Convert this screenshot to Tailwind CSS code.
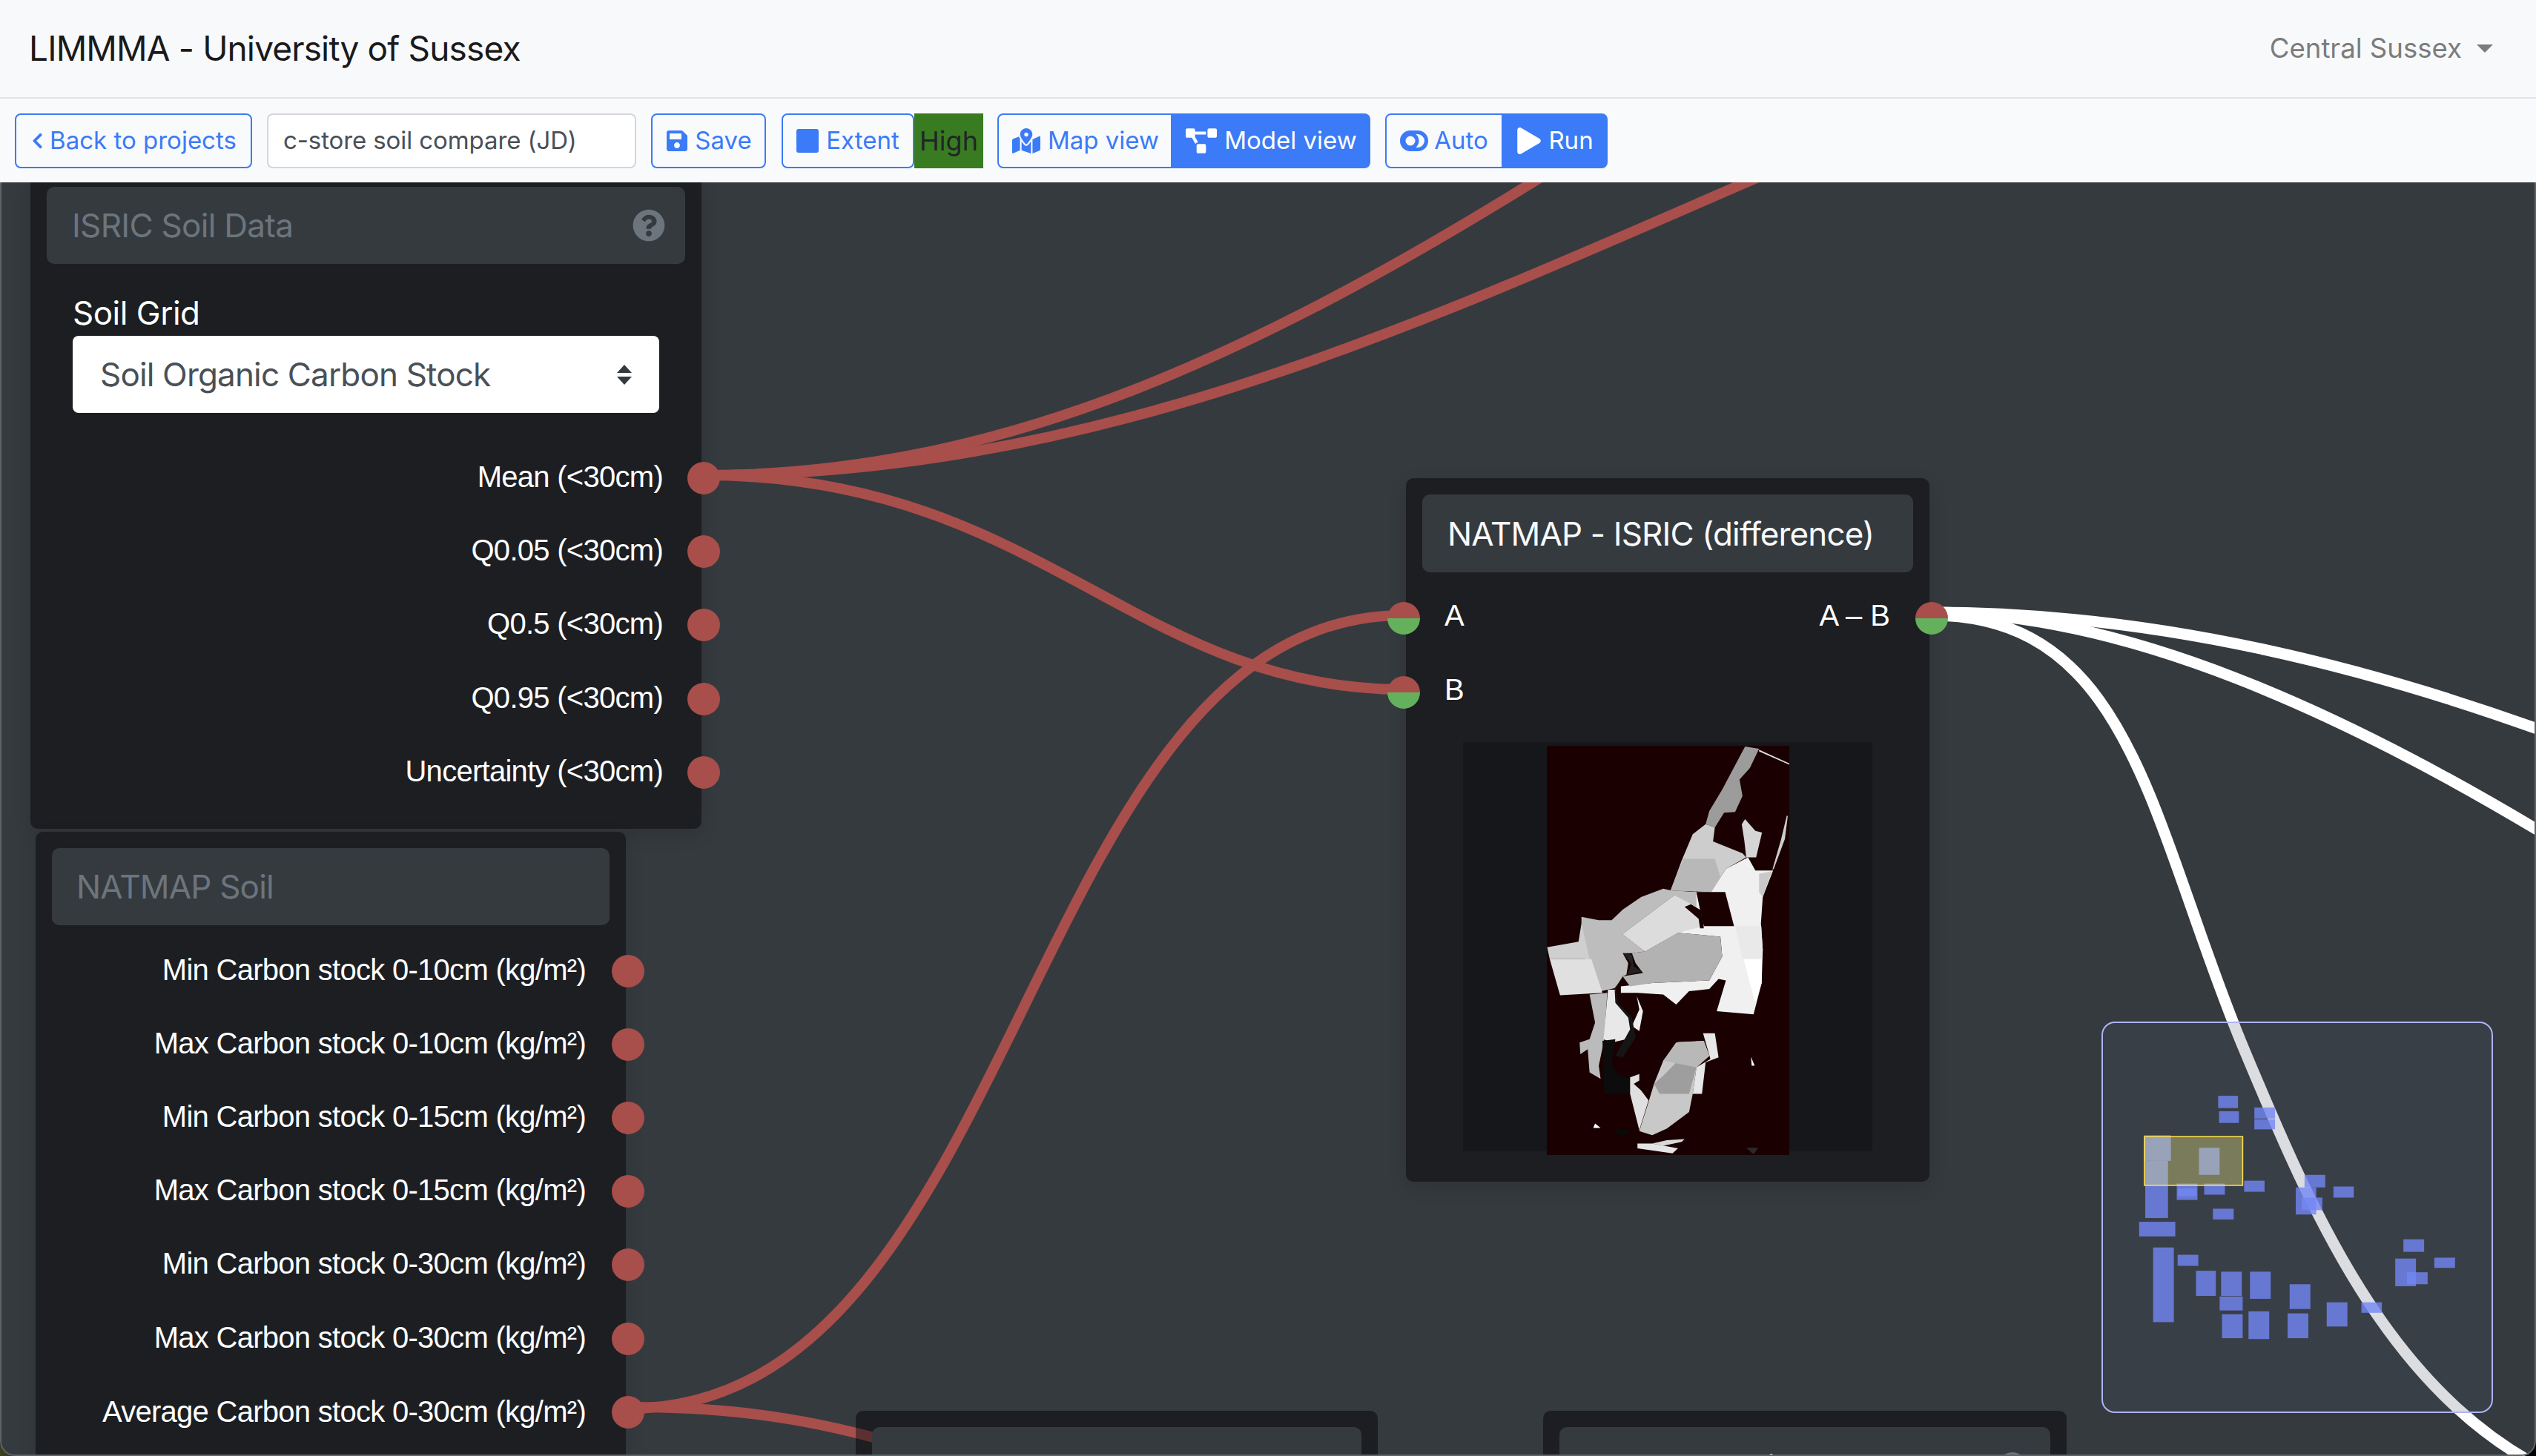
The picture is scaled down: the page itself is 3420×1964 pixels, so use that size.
<!DOCTYPE html>
<html lang="en">
<head>
  <meta charset="UTF-8" />
  <title>LIMMMA - University of Sussex</title>
  <script src="https://cdn.jsdelivr.net/npm/@tailwindcss/browser@4"></script>
</head>
<body class="bg-[linear-gradient(to_right,#3a4020,#000)]">
<div class="w-[3420px] h-[1964px] flex flex-col overflow-hidden font-['Inter',sans-serif]">

  <!-- Navbar -->
  <div class="h-[133px] shrink-0 bg-[#f8f9fb] border-b-2 border-[#e2e3ea] flex items-center justify-between pl-[39px] pr-[58px]">
    <div class="text-[46px] text-[#1a1a1a] tracking-[-0.85px]">LIMMMA - University of Sussex</div>
    <div class="flex items-center text-[#7c7c7c] text-[36.6px] gap-[20px]">
      Central Sussex
      <span class="w-0 h-0 border-x-[11px] border-x-transparent border-t-[11px] border-t-[#7c7c7c]"></span>
    </div>
  </div>

  <!-- Toolbar -->
  <div class="h-[113px] shrink-0 bg-[#f9fafc] flex items-center pl-[20px] text-[33px] text-[#3b7bf7]">
    <button class="h-[74px] w-[320px] border-2 border-[#3b7bf7] rounded-[8px] flex items-center justify-center gap-[9px] pl-[2px]">
      <svg class="h-[24px] w-[15px] fill-current" viewBox="0 0 320 512"><path d="M34.52 239.03L228.87 44.69c9.37-9.37 24.57-9.37 33.94 0l22.67 22.67c9.36 9.36 9.37 24.52.04 33.9L131.49 256l154.02 154.75c9.34 9.38 9.32 24.54-.04 33.9l-22.67 22.67c-9.37 9.37-24.57 9.37-33.94 0L34.52 272.97c-9.37-9.37-9.37-24.57 0-33.94z"/></svg>
      Back to projects
    </button>
    <div class="h-[74px] w-[498px] ml-[20px] bg-white border-2 border-[#d3d6da] rounded-[8px] flex items-center pl-[20px] text-[#495057] tracking-[-0.1px]">c-store soil compare (JD)</div>
    <button class="h-[74px] w-[155px] ml-[20px] border-2 border-[#3b7bf7] rounded-[8px] flex items-center justify-center gap-[10px] pl-[2px]">
      <svg class="h-[32px] w-[28px] fill-current" viewBox="0 0 448 512"><path d="M433.941 129.941l-83.882-83.882A48 48 0 0 0 316.118 32H48C21.49 32 0 53.49 0 80v352c0 26.51 21.49 48 48 48h352c26.51 0 48-21.49 48-48V163.882a48 48 0 0 0-14.059-33.941zM224 416c-35.346 0-64-28.654-64-64 0-35.346 28.654-64 64-64s64 28.654 64 64c0 35.346-28.654 64-64 64zm96-304.52V212c0 6.627-5.373 12-12 12H76c-6.627 0-12-5.373-12-12V108c0-6.627 5.373-12 12-12h228.52c3.183 0 6.235 1.264 8.485 3.515l3.48 3.48A11.996 11.996 0 0 1 320 111.48z"/></svg>
      Save
    </button>
    <button class="h-[74px] w-[179px] ml-[21px] border-2 border-[#3b7bf7] rounded-[8px] flex items-center justify-center gap-[10px]">
      <span class="w-[30px] h-[32px] bg-[#3b7bf7] rounded-[3px]"></span>
      Extent
    </button>
    <div class="h-[74px] w-[93px] bg-[#397b21] text-[#212529] text-[36px] flex items-center justify-center">High</div>

    <div class="flex h-[74px] ml-[19px] w-[503px]">
      <button class="w-[236px] border-2 border-[#3b7bf7] rounded-l-[8px] flex items-center justify-center gap-[10px] pl-[2px]">
        <svg class="h-[38px] w-[38px] fill-current" viewBox="0 0 576 512"><path d="M288 0c-69.59 0-126 56.41-126 126 0 56.26 82.35 158.8 113.9 196.02 6.39 7.54 17.82 7.54 24.2 0C331.65 284.8 414 182.26 414 126 414 56.41 357.59 0 288 0zm0 168c-23.2 0-42-18.8-42-42s18.8-42 42-42 42 18.8 42 42-18.8 42-42 42zM20.12 215.95A32.006 32.006 0 0 0 0 245.66v250.32c0 11.32 11.43 19.06 21.94 14.86L160 448V214.92c-8.84-15.98-16.07-31.54-21.25-46.42L20.12 215.95zM288 359.67c-14.07 0-27.38-6.18-36.51-16.96-19.66-23.2-40.57-49.62-59.49-76.72v182l192 64V266c-18.92 27.09-39.82 53.52-59.49 76.72-9.13 10.77-22.44 16.95-36.51 16.95zm266.06-198.51L416 224v288l139.88-55.95A31.996 31.996 0 0 0 576 426.34V176.02c0-11.32-11.43-19.06-21.94-14.86z"/></svg>
        Map view
      </button>
      <button class="flex-1 bg-[#3b7bf7] text-white rounded-r-[8px] flex items-center justify-center gap-[10px]">
        <svg class="h-[38px] w-[42px] fill-current" viewBox="0 0 640 512"><path d="M384 320H256c-17.67 0-32 14.33-32 32v128c0 17.67 14.33 32 32 32h128c17.67 0 32-14.33 32-32V352c0-17.67-14.33-32-32-32zM192 32c0-17.67-14.33-32-32-32H32C14.33 0 0 14.33 0 32v128c0 17.67 14.33 32 32 32h95.72l73.16 128.04C211.98 300.98 232.4 288 256 288h.28L192 175.51V128h224V64H192V32zM608 0H480c-17.67 0-32 14.33-32 32v128c0 17.67 14.33 32 32 32h128c17.67 0 32-14.33 32-32V32c0-17.67-14.33-32-32-32z"/></svg>
        Model view
      </button>
    </div>

    <div class="flex h-[74px] ml-[20px] w-[300px]">
      <button class="w-[159px] border-2 border-[#3b7bf7] rounded-l-[8px] flex items-center justify-center gap-[8px]">
        <svg class="h-[28px] w-[38px] fill-none stroke-current" stroke-width="5" viewBox="0 0 38 28"><rect x="2.5" y="2.5" width="33" height="23" rx="11.5"/><circle cx="14" cy="14" r="9"/></svg>
        Auto
      </button>
      <button class="flex-1 bg-[#3b7bf7] text-white rounded-r-[8px] flex items-center justify-center gap-[10px]">
        <svg class="h-[36px] w-[32px] fill-current" viewBox="0 0 448 512"><path d="M424.4 214.7L72.4 6.6C43.8-10.3 0 6.1 0 47.9V464c0 37.5 40.7 60.1 72.4 41.3l352-208c31.4-18.5 31.5-64.1 0-82.6z"/></svg>
        Run
      </button>
    </div>
  </div>

  <!-- Model canvas -->
  <div class="relative flex-1 bg-[#353a3f] overflow-hidden rounded-b-[20px]">

    <!-- Wires -->
    <svg class="absolute left-0 top-0 w-[3420px] h-[1718px]" viewBox="0 246 3420 1718" fill="none" stroke-linecap="round">
      <g stroke="#a84e4b" stroke-width="14">
        <path d="M949 641 C1350 641 1700 480 2140 200"/>
        <path d="M949 641 C1500 641 1950 420 2415 220"/>
        <path d="M949 641 C1400 641 1530 930 1893 930"/>
        <path d="M847 1900 C1380 1900 1380 830 1893 830"/>
        <path d="M847 1898 C950 1898 1060 1905 1200 1945"/>
      </g>
      <g stroke="#ffffff" stroke-width="15">
        <path d="M2605 826 C2900 826 3200 895 3520 1020"/>
        <path d="M2605 826 C2850 826 3150 945 3520 1180"/>
        <path d="M2605 830 C2875 830 2900 1110 3024 1410 C3122 1645 3230 1900 3470 2000"/>
      </g>
    </svg>

    <!-- ISRIC Soil Data -->
    <div class="absolute left-[41px] top-[-16px] w-[905px] h-[888px] bg-[#1c1e22] rounded-[10px] p-[22px] shadow-[0_8px_24px_rgba(0,0,0,0.12)]">
      <div class="h-[104px] bg-[#353a3f] rounded-[10px] flex items-center justify-between pl-[34px] pr-[27px] text-[#6c757d] text-[44px] tracking-[-0.7px]">
        ISRIC Soil Data
        <svg class="w-[44px] h-[44px] fill-[#6c757d]" viewBox="0 0 512 512"><path d="M504 256c0 136.997-111.043 248-248 248S8 392.997 8 256C8 119.083 119.043 8 256 8s248 111.083 248 248zM262.655 90c-54.497 0-89.255 22.957-116.549 63.758-3.536 5.286-2.353 12.415 2.715 16.258l34.699 26.31c5.205 3.947 12.621 3.008 16.665-2.122 17.864-22.658 30.113-35.797 57.303-35.797 20.429 0 45.698 13.148 45.698 32.958 0 14.976-12.363 22.667-32.534 33.976C247.128 238.528 216 254.941 216 296v4c0 6.627 5.373 12 12 12h56c6.627 0 12-5.373 12-12v-1.333c0-28.462 83.186-29.647 83.186-106.667 0-58.002-60.165-102-116.531-102zM256 338c-25.365 0-46 20.635-46 46 0 25.364 20.635 46 46 46s46-20.636 46-46c0-25.365-20.635-46-46-46z"/></svg>
      </div>
      <div class="px-[35px]">
        <div class="h-[97px] flex items-end pb-[3px] text-white text-[44px] leading-[56px] tracking-[-0.5px]">Soil Grid</div>
        <div class="h-[104px] bg-white rounded-[8px] flex items-center justify-between pl-[37px] pr-[36px] text-[#495057] text-[44px] tracking-[-0.84px]">
          Soil Organic Carbon Stock
          <svg class="w-[22px] h-[27px] fill-[#343a40]" viewBox="0 0 22 27"><path d="M11 0l10 11H1zM11 27L1 16h20z"/></svg>
        </div>
      </div>
      <div class="mt-[38px] flex flex-col font-['Liberation_Sans',sans-serif] text-white text-[40px] tracking-[-0.72px]">
        <div class="h-[99.3px] flex items-center justify-end gap-[33px] mr-[-47px]"><span class="mb-[4px]">Mean (&lt;30cm)</span><span class="w-[44px] h-[44px] rounded-full bg-[#a84e4b]"></span></div>
        <div class="h-[99.3px] flex items-center justify-end gap-[33px] mr-[-47px]"><span class="mb-[4px]">Q0.05 (&lt;30cm)</span><span class="w-[44px] h-[44px] rounded-full bg-[#a84e4b]"></span></div>
        <div class="h-[99.3px] flex items-center justify-end gap-[33px] mr-[-47px]"><span class="mb-[4px]">Q0.5 (&lt;30cm)</span><span class="w-[44px] h-[44px] rounded-full bg-[#a84e4b]"></span></div>
        <div class="h-[99.3px] flex items-center justify-end gap-[33px] mr-[-47px]"><span class="mb-[4px]">Q0.95 (&lt;30cm)</span><span class="w-[44px] h-[44px] rounded-full bg-[#a84e4b]"></span></div>
        <div class="h-[99.3px] flex items-center justify-end gap-[33px] mr-[-47px]"><span class="mb-[4px]">Uncertainty (&lt;30cm)</span><span class="w-[44px] h-[44px] rounded-full bg-[#a84e4b]"></span></div>
      </div>
    </div>

    <!-- NATMAP Soil -->
    <div class="absolute left-[48px] top-[876px] w-[796px] h-[900px] bg-[#1c1e22] rounded-[10px] p-[22px] shadow-[0_8px_24px_rgba(0,0,0,0.12)]">
      <div class="h-[104px] bg-[#353a3f] rounded-[10px] flex items-center pl-[33px] text-[#6c757d] text-[44px] tracking-[-0.8px]">NATMAP Soil</div>
      <div class="mt-[12px] flex flex-col font-['Liberation_Sans',sans-serif] text-white text-[40px] tracking-[-0.72px]">
        <div class="h-[99.2px] flex items-center justify-end gap-[35px] mr-[-47px]"><span class="mb-[4px]">Min Carbon stock 0-10cm (kg/m²)</span><span class="w-[44px] h-[44px] rounded-full bg-[#a84e4b]"></span></div>
        <div class="h-[99.2px] flex items-center justify-end gap-[35px] mr-[-47px]"><span class="mb-[4px]">Max Carbon stock 0-10cm (kg/m²)</span><span class="w-[44px] h-[44px] rounded-full bg-[#a84e4b]"></span></div>
        <div class="h-[99.2px] flex items-center justify-end gap-[35px] mr-[-47px]"><span class="mb-[4px]">Min Carbon stock 0-15cm (kg/m²)</span><span class="w-[44px] h-[44px] rounded-full bg-[#a84e4b]"></span></div>
        <div class="h-[99.2px] flex items-center justify-end gap-[35px] mr-[-47px]"><span class="mb-[4px]">Max Carbon stock 0-15cm (kg/m²)</span><span class="w-[44px] h-[44px] rounded-full bg-[#a84e4b]"></span></div>
        <div class="h-[99.2px] flex items-center justify-end gap-[35px] mr-[-47px]"><span class="mb-[4px]">Min Carbon stock 0-30cm (kg/m²)</span><span class="w-[44px] h-[44px] rounded-full bg-[#a84e4b]"></span></div>
        <div class="h-[99.2px] flex items-center justify-end gap-[35px] mr-[-47px]"><span class="mb-[4px]">Max Carbon stock 0-30cm (kg/m²)</span><span class="w-[44px] h-[44px] rounded-full bg-[#a84e4b]"></span></div>
        <div class="h-[99.2px] flex items-center justify-end gap-[35px] mr-[-47px]"><span class="mb-[2px]">Average Carbon stock 0-30cm (kg/m²)</span><span class="w-[44px] h-[44px] rounded-full bg-[#a84e4b]"></span></div>
      </div>
    </div>

    <!-- NATMAP - ISRIC (difference) -->
    <div class="absolute left-[1896px] top-[399px] w-[706px] h-[949px] bg-[#1c1e22] rounded-[10px] p-[22px] shadow-[0_8px_24px_rgba(0,0,0,0.12)]">
      <div class="h-[105px] bg-[#353a3f] rounded-[10px] flex items-center pl-[34px] text-[#f8f9fa] text-[44px] tracking-[-0.85px]">NATMAP - ISRIC (difference)</div>
      <div class="mt-[12px] h-[200px] flex justify-between text-white text-[40px] font-['Liberation_Sans',sans-serif]">
        <div class="flex flex-col ml-[-47px]">
          <div class="h-[100px] flex items-center gap-[33px]"><span class="w-[44px] h-[44px] rounded-full bg-[linear-gradient(#a84e4b_50%,#64b05c_50%)]"></span><span class="mb-[8px]">A</span></div>
          <div class="h-[100px] flex items-center gap-[33px]"><span class="w-[44px] h-[44px] rounded-full bg-[linear-gradient(#a84e4b_50%,#64b05c_50%)]"></span><span class="mb-[8px]">B</span></div>
        </div>
        <div class="h-[100px] flex items-center gap-[34px] mr-[-47px]"><span class="mb-[8px]">A – B</span><span class="w-[44px] h-[44px] rounded-full bg-[linear-gradient(#a84e4b_50%,#64b05c_50%)]"></span></div>
      </div>
      <div class="mt-[17px] mx-[55px] h-[552px] bg-[#15171a] flex justify-center">
        <svg class="w-[327px] h-[552px] mt-[5px] shrink-0 bg-[#1a0000]" viewBox="474 103 658 1237" preserveAspectRatio="none">
          <polygon fill="#9c9c9c" points="1012,105 1050,112 1025,170 997,205 1005,255 985,303 955,305 930,350 905,340 915,300 950,235"/>
          <polygon fill="#cdcdcd" points="905,340 930,350 925,392 1005,428 1015,440 960,475 920,545 810,540 840,450 870,370"/>
          <polygon fill="#b8b8b8" points="845,445 930,445 945,500 920,545 810,540"/>
          <polygon fill="#d5d5d5" points="1003,340 1012,325 1040,360 1058,365 1042,440 1015,440 1010,390"/>
          <polygon fill="#f0f0f0" points="960,475 1020,440 1040,480 1088,480 1060,560 1055,640 1060,720 1057,820 1035,915 935,905 960,812 940,808 915,838 860,845 825,885 790,855 720,850 675,850 675,830 760,820 915,812 950,740 945,680 830,668 740,725 680,672 820,555 880,545 920,545"/>
          <polygon fill="#e9e9e9" points="985,648 1056,648 1060,720 1058,748 1005,748"/>
          <polygon fill="#ffffff" points="1008,748 1057,748 1057,820 1040,880 1025,820"/>
          <polygon fill="#c9c9c9" points="1050,490 1085,482 1060,560 1050,545"/>
          <polygon fill="#1a0000" points="880,545 958,545 982,648 900,648 890,600"/>
          <polygon fill="#dcdcdc" points="820,555 880,590 890,600 900,648 830,668 740,725 680,672"/>
          <polygon fill="#b2b2b2" points="830,668 945,680 950,740 915,812 760,820 700,830 680,800 735,790 715,760 705,730 740,725"/>
          <polygon fill="#bdbdbd" points="810,540 880,545 880,590 820,555 680,672 740,725 705,730 680,730 695,760 690,795 680,800 660,835 600,850 568,700 568,620 615,630 650,630 680,598 730,560 790,535"/>
          <polygon fill="#cfcfcf" points="475,712 560,695 568,640 590,748 482,748"/>
          <polygon fill="#e0e0e0" points="482,748 595,748 625,850 510,857"/>
          <polygon fill="#bbbbbb" points="590,855 638,850 630,990 615,1070 620,1110 590,1090 585,1020 565,1035 563,1000 590,990 605,940"/>
          <polygon fill="#e8e8e8" points="640,840 660,840 665,880 700,925 705,960 690,990 650,1000 628,990"/>
          <polygon fill="#eeeeee" points="718,860 735,905 725,965 705,950 725,900"/>
          <polygon fill="#151515" points="680,805 660,840 668,880 705,925 715,985 680,1045 660,1040 700,960 695,925 660,880 658,835"/>
          <polygon fill="#0c0c0c" points="625,995 660,990 650,1060 665,1095 700,1110 700,1155 630,1155"/>
          <polygon fill="#0a0a0a" points="650,1262 700,1262 680,1288"/>
          <polygon fill="#c8c8c8" points="825,1000 900,995 915,1040 880,1075 870,1155 860,1210 800,1260 760,1280 725,1268 750,1180 765,1125 790,1055"/>
          <polygon fill="#9e9e9e" points="790,1100 830,1055 880,1075 860,1155 780,1155 765,1125"/>
          <polygon fill="#b8b8b8" points="830,998 900,995 915,1040 880,1075 790,1055"/>
          <polygon fill="#e6e6e6" points="898,972 930,972 940,1045 905,1060 895,1155 870,1155 880,1075 918,1050"/>
          <polygon fill="#e0e0e0" points="700,1105 725,1095 725,1115 710,1125 730,1145 750,1175 725,1265 700,1155"/>
          <polygon fill="#e4e4e4" points="720,1305 760,1305 830,1320 815,1335 720,1320"/>
          <polygon fill="#d8d8d8" points="760,1305 800,1295 848,1292 840,1300 790,1312"/>
          <polygon fill="#ffffff" points="605,1245 620,1258 600,1258"/>
          <polygon fill="#ffffff" points="1028,1043 1038,1070 1030,1070"/>
          <polygon fill="#e0e0e0" points="1050,115 1132,156 1132,160 1050,120"/>
          <polygon fill="#cccccc" points="1125,315 1128,315 1120,385 1090,475 1086,478 1110,385"/>
          <polygon fill="#2a2a2a" points="1015,1318 1048,1318 1035,1338"/>
          <polygon fill="#222222" points="682,730 705,735 710,770 733,785 693,796 703,762"/>
          <polygon fill="#1a0000" points="848,590 865,582 892,600 895,620 885,625"/>
          <polygon fill="#1a0000" points="885,620 897,620 900,655 890,655"/>
        </svg>
      </div>
    </div>

    <!-- Nodes cut off by the bottom edge -->
    <div class="absolute left-[1154px] top-[1657px] w-[704px] h-[200px] bg-[#1c1e22] rounded-[10px] p-[22px] overflow-hidden">
      <svg class="absolute left-0 top-0 w-[704px] h-[200px]" viewBox="1154 1903 704 200" fill="none"><path d="M847 1898 C950 1898 1060 1905 1200 1945" stroke="#5c3030" stroke-width="14"/></svg>
      <div class="relative h-[104px] bg-[#353a3f] rounded-[10px] pl-[36px] pt-[28px] text-[#6c757d] text-[44px] leading-[50px]">Area Stats</div>
    </div>
    <div class="absolute left-[2081px] top-[1657px] w-[706px] h-[200px] bg-[#1c1e22] rounded-[10px] p-[22px]">
      <div class="h-[104px] bg-[#353a3f] rounded-[10px] flex items-start justify-between pl-[34px] pr-[29px] pt-[28px] text-[#f8f9fa] text-[44px] leading-[50px] tracking-[-0.8px]">
        NATMAP Soil carbon
        <span class="w-[44px] h-[44px] mt-[6px] rounded-full bg-[#6c757d]"></span>
      </div>
    </div>

    <!-- Minimap -->
    <svg class="absolute left-[2834px] top-[1132px] w-[528px] h-[528px] rounded-[18px] border-2 border-[#aeb3f2] bg-[#4a5568]/20" viewBox="88 97 1332 1323" fill="#7387f5" fill-opacity="0.8">
      <rect x="483" y="342" width="68" height="42"/>
      <rect x="486" y="395" width="68" height="40"/>
      <rect x="607" y="382" width="71" height="38"/>
      <rect x="607" y="422" width="71" height="35"/>
      <rect x="229" y="477" width="92" height="88"/>
      <rect x="233" y="565" width="78" height="196"/>
      <rect x="417" y="520" width="71" height="93"/>
      <rect x="341" y="643" width="71" height="56"/>
      <rect x="345" y="660" width="63" height="26"/>
      <rect x="435" y="643" width="71" height="38"/>
      <rect x="572" y="633" width="70" height="38"/>
      <rect x="465" y="729" width="71" height="37"/>
      <rect x="212" y="774" width="124" height="50"/>
      <rect x="260" y="862" width="71" height="256"/>
      <rect x="344" y="887" width="71" height="38"/>
      <rect x="407" y="942" width="68" height="86"/>
      <rect x="493" y="945" width="71" height="83"/>
      <rect x="592" y="945" width="71" height="93"/>
      <rect x="488" y="1030" width="79" height="48"/>
      <rect x="496" y="1091" width="71" height="82"/>
      <rect x="587" y="1081" width="71" height="95"/>
      <rect x="728" y="988" width="71" height="85"/>
      <rect x="721" y="1088" width="71" height="85"/>
      <rect x="855" y="1050" width="71" height="83"/>
      <rect x="974" y="1050" width="70" height="36"/>
      <rect x="779" y="613" width="71" height="43"/>
      <rect x="749" y="656" width="70" height="93"/>
      <rect x="769" y="691" width="71" height="43"/>
      <rect x="878" y="653" width="70" height="38"/>
      <rect x="1118" y="834" width="71" height="43"/>
      <rect x="1090" y="900" width="71" height="95"/>
      <rect x="1130" y="947" width="71" height="41"/>
      <rect x="1224" y="897" width="71" height="35"/>
      <rect x="230" y="482" width="337" height="167" fill="#fffa83" fill-opacity="0.325" stroke="#ffe14d" stroke-opacity="1" stroke-width="4"/>
    </svg>

    <!-- Window edge -->
    <div class="absolute inset-0 border-x-2 border-b-2 border-[#5f6469] rounded-b-[20px] pointer-events-none"></div>
  </div>
</div>
</body>
</html>
